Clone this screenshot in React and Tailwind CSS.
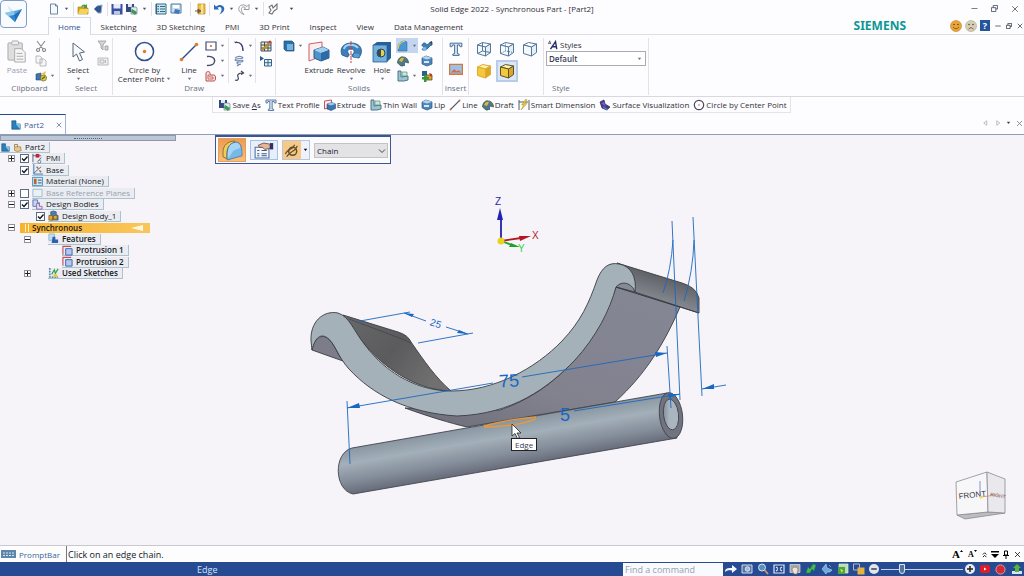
import React, { useState } from "react";
import { Minus, X } from "lucide-react";

// Small toolbar glyphs, all drawn on a 12x12 grid
const glyphs = {
  new: <path d="M2.5 1h5l2 2v8h-7z M7.5 1v2h2" fill="#f5f8fc" stroke="#5d7896" strokeWidth="0.9" />,
  open: (
    <>
      <path d="M1 4h4l1 1h5v6H1z" fill="#d9a520" stroke="#a5780e" strokeWidth="0.6" />
      <path d="M1 11l2-5h9l-2 5z" fill="#f4d35c" />
      <path d="M4 4C5 1 8 1 9 2l1-1v4H6l1.500-1.500" fill="#4f9a3c" />
    </>
  ),
  camera: <path d="M2 6l3-3 5-1-1 8H6z" fill="#30568f" stroke="#8fa9cc" strokeWidth="1" />,
  save: (
    <>
      <path d="M.5 1h11v10.500H.5z" fill="#3b4fa0" />
      <path d="M2.500 1h7v4.500h-7z" fill="#e6ecf7" />
      <path d="M3 8h6v3.500H3z" fill="#b9c8e2" />
    </>
  ),
  saveAs: (
    <>
      <path d="M0 1h8v8H0z" fill="#34497f" />
      <path d="M2 1h4v3H2z" fill="#dfe8f4" />
      <path d="M5 4h5l1 1v6H5z" fill="#dfe9ee" stroke="#52708f" strokeWidth=".6" />
      <path d="M6 6l5 3-2 3-4-3z" fill="#3c9a4c" />
    </>
  ),
  list: (
    <>
      <path d="M1 1h10v10H1z" fill="#cde4ec" stroke="#2f6a87" />
      <path d="M1.500 1v10M5 3.500h5M5 6h5M5 8.500h5M2.500 3.500h1.500M2.500 6h1.500M2.500 8.500h1.500" stroke="#2f6a87" strokeWidth="1.200" />
    </>
  ),
  saveView: (
    <>
      <path d="M1 1h10v9H1z" fill="#c7dcef" stroke="#557aa5" />
      <path d="M3 2h6v3H3z" fill="#fff" />
      <path d="M5 6l5 1-1 4-5-1z" fill="#3b79b8" />
    </>
  ),
  exit: (
    <>
      <path d="M4 1h7v10H4z" fill="#f0c046" stroke="#b98619" strokeWidth=".7" />
      <path d="M1 8h5M4 6l3 2-3 2z" stroke="#705f42" fill="#705f42" />
      <path d="M8 1v10" stroke="#fff" />
    </>
  ),
  undo: <path d="M1 1.500v5h5L4.500 4.800C7 3 9 4.200 8.500 7.500 8.300 9 7 10.500 6 11.500 10 10 12 7 11 4.500 9.700 1.500 6 1 3 3.500z" fill="#2d6bb8" />,
  redo: <path d="M11 1.500v5H6l1.500-1.700C5 3 3 4.200 3.500 7.500c.2 1.500 1.500 3 2.500 4C2 10 0 7 1 4.500 2.300 1.500 6 1 9 3.500z" fill="none" stroke="#8a8f96" strokeWidth=".9" />,
  help: <path d="M2 4l3-2 1 3 4-4v5L7 8l-2 3-3-1 2-3z" fill="none" stroke="#6f7379" strokeWidth="1.100" />,
  cut: <path d="M2 1l6 8M10 1L4 9M3 8.500a1.500 1.500 0 1 0 .1 0M9 8.500a1.500 1.500 0 1 0 .1 0" fill="none" stroke="#8b8b8b" strokeWidth="1.100" />,
  copy: <path d="M1 1h4l2 2v5H1zM5 4h4l2 2v5H5z" fill="#f6f6f6" stroke="#adadad" strokeWidth=".8" />,
  painter: (
    <>
      <path d="M1 4l5-1v7H1z" fill="#3d74b2" stroke="#214a7e" strokeWidth=".6" />
      <path d="M6 4l5-3-1 4z" fill="#e8c33b" />
      <circle cx="8.500" cy="8" r="3" fill="#e8c83d" stroke="#77702a" strokeWidth=".8" />
      <path d="M7 9l3-2.500" stroke="#3a6d38" strokeWidth="1.200" />
    </>
  ),
  filter: <path d="M1 1h8L6 5v5L4 8V5zM8 6h3v4H8z" fill="#d5d5d5" stroke="#9b9b9b" strokeWidth=".8" />,
  selBox: <path d="M1 3h10v7H1zM3 5h4v3H3zM8.500 5v3" fill="#eee" stroke="#adadad" strokeWidth=".8" />,
  rect: (
    <>
      <path d="M1 2h10v8H1z" fill="#fff" stroke="#454a72" strokeWidth="1.200" />
      <circle cx="6" cy="6" r="1.100" fill="#d66b3c" />
    </>
  ),
  arc: <path d="M2 1.500c6-1 9 3 7 6.500C8 10 5 10.500 2 10.500" fill="none" stroke="#454a6c" strokeWidth="1.300" />,
  offset: (
    <>
      <path d="M1 11V3c0-1.500 4-2 4 0v2h4c2 0 2 6 0 6z" fill="#fbe3e0" stroke="#b84c4c" />
      <path d="M3 9V5c1-1 1 2 2 2h3v2z" fill="none" stroke="#b84c4c" strokeWidth=".8" />
    </>
  ),
  fillet: (
    <>
      <path d="M1 2h4" stroke="#999" strokeDasharray="1 1" />
      <path d="M2 2.500c5-1 8 2 8 8.500" fill="none" stroke="#3b3f73" strokeWidth="1.300" />
    </>
  ),
  spiral: <path d="M2 3c4-3 8-1 8 0S3 3 2 5c1 2 8-1 8 1s-7 0-6 2 4 1 4 1-3 1-4 2" fill="none" stroke="#6f89b0" strokeWidth="1.100" />,
  curve: <path d="M2 10c3 1 4-1 3-3s0-4 5-4M8 1l2.500 2L8 4.500" fill="none" stroke="#42465a" strokeWidth="1.200" />,
  grid: (
    <>
      <path d="M1 2h10v9H1zM4.500 2v9M8 2v9M1 5h10M1 8h10" fill="#f8edb0" stroke="#3a4d73" />
      <path d="M2 10l7-7" stroke="#b79028" strokeWidth="1.800" />
      <circle cx="10" cy="2" r="1.500" fill="#c13d47" />
    </>
  ),
  table: (
    <>
      <path d="M0 1l4 2.500L0 6z" fill="#1f5d96" />
      <path d="M4.500 4.500h7v6.500h-7zM8 4.500V11M4.500 7.700h7" fill="#e4f0f7" stroke="#36648b" />
    </>
  ),
  cube: (
    <>
      <path d="M1 1h8l2 2v8H3L1 9z" fill="#2c6ea8" stroke="#214a76" strokeWidth=".7" />
      <path d="M4 4h6v6H4z" fill="#74b5df" />
    </>
  ),
  round: (
    <>
      <path d="M1 11V7c0-3 3-6 7-6l2 1v9z" fill="#4b96d4" stroke="#2f6197" strokeWidth=".5" />
      <path d="M1 9c0-5 3-7 7-8" fill="none" stroke="#e9cf4c" strokeWidth="1.200" />
    </>
  ),
  draft: (
    <>
      <path d="M.5 8c0-4 3-7 6-6 3 0 5 3 5 6L8 7 6 11H4z" fill="#527a76" stroke="#38544f" strokeWidth=".7" />
      <path d="M2 6c1-3 3-4 5-3L5 7z" fill="#d4b855" />
      <path d="M6 6h2v5H6z" fill="#4375ab" />
    </>
  ),
  thin: (
    <>
      <path d="M1 1h3v6l7-1v4l-4 1H1z" fill="#9dc4d2" stroke="#3f6b80" strokeWidth=".9" />
      <path d="M5 2h5v4H5z" fill="#cfe6dd" stroke="#4f8a82" strokeWidth=".7" />
    </>
  ),
  extrude: (
    <>
      <path d="M.5 2l7-1v7l-7 2z" fill="#fceeee" stroke="#c9555c" />
      <path d="M3 5l5-1.500 3.500 1.500v4.500L7 11.500 3 10z" fill="#3c75b0" stroke="#2a4d7c" strokeWidth=".6" />
      <path d="M3 5l4 1.500L11.500 5 8 3.500z" fill="#9cc7e8" />
    </>
  ),
  sweep: (
    <>
      <path d="M1 6C1 3 4 2 5 4c2 2 3-2 6-2v3C8 5 8 9 4 10 0 11 1 8 3 8" fill="#3b82bd" stroke="#22476f" strokeWidth=".8" />
      <circle cx="3.500" cy="9" r="2" fill="#83b9e2" />
      <path d="M8 2.500l3-1.500v3" fill="#274a74" />
    </>
  ),
  lip: (
    <>
      <path d="M1 3l4-2 6 2v6l-5 2-5-2z" fill="#4d86bc" stroke="#2c557e" strokeWidth=".7" />
      <path d="M1 3l5 1.500L11 3 5 1z" fill="#b4d4ec" />
      <path d="M3 6h5v2H3z" fill="#d7e9f5" />
    </>
  ),
  combine: (
    <>
      <path d="M1 1h5v5H1z" fill="#2c5f96" />
      <path d="M5 5h6v5H5z" fill="#d9a52f" stroke="#593a16" strokeWidth=".7" />
      <path d="M3 5h2.500v2H8v2.500H5.500V12H3V9.500H1V7h2z" fill="#37973c" />
      <path d="M8 3l3 1-1 3z" fill="#b53027" />
    </>
  ),
  text: <path d="M1 1h10v3H9.500L9 2.500H7.200v7.500l1.500.3V11.500H3.300v-1.200l1.500-.3V2.500H3L2.500 4H1z" fill="#d6e6f5" stroke="#3e6690" strokeWidth=".8" />,
  image: (
    <>
      <path d="M.5 2h11v8.500H.5z" fill="#9cc0e8" stroke="#cf7a3f" strokeWidth="1.200" />
      <path d="M1.500 9l3-3 2 2 2-1 2 2z" fill="#d56d4b" />
    </>
  ),
  line: (
    <>
      <path d="M1.500 10.500l9-9" stroke="#5e5a68" strokeWidth="1.100" />
      <circle cx="1.500" cy="10.500" r=".9" fill="#c7683a" />
      <circle cx="10.500" cy="1.500" r=".9" fill="#c7683a" />
    </>
  ),
  smart: (
    <>
      <path d="M1 1v10M11 1v10M1 3h9" stroke="#444b5c" strokeWidth=".9" />
      <path d="M8 0L3.500 6h2.200L3 11l6-6.500H6.500L9 1z" fill="#e9cf2c" stroke="#8f7d1d" strokeWidth=".4" />
    </>
  ),
  surface: (
    <>
      <path d="M1 3l4-2 1 4 5 3-3 3-5-2z" fill="#473c8f" stroke="#2a2260" strokeWidth=".7" />
      <path d="M2 4l3-1 2 5z" fill="#7a5bb7" />
      <path d="M4 8l5 3" stroke="#54a1d4" />
    </>
  ),
  circle: (
    <>
      <circle cx="6" cy="6" r="4.700" fill="none" stroke="#4a4c62" strokeWidth="1.200" />
      <circle cx="6" cy="6" r=".8" fill="#c56738" />
    </>
  ),
  styles: (
    <>
      <path d="M.5 5L2 1l1.500 4M1 4h2" fill="none" stroke="#333" strokeWidth=".8" />
      <path d="M3 11l6-9 1.500 9M5 8h5" fill="none" stroke="#252a6b" strokeWidth="1.700" />
    </>
  ),
  part: (
    <>
      <path d="M1 1h5v4h5v6H1z" fill="#2b7fba" stroke="#1d4f7d" strokeWidth=".8" />
      <path d="M6 5l1-1h4v7" fill="#86c3e6" />
    </>
  ),
  lock: (
    <>
      <path d="M2 5h8l1 5-5 1.500L2 10z" fill="#e6c98a" stroke="#8d6b33" strokeWidth=".8" />
      <path d="M2 5V2h4v3" fill="none" stroke="#8d6b33" />
    </>
  ),
  pmi: (
    <>
      <path d="M1 1v9M1 3h9M7 9l3-4" stroke="#4a5274" strokeWidth=".9" />
      <path d="M4 1h4v4H4z" fill="#c22535" />
      <circle cx="8" cy="9.500" r="1.600" fill="#fff" stroke="#4a5274" strokeWidth=".8" />
    </>
  ),
  base: (
    <>
      <path d="M2 0v11h10M2 10l8-7" stroke="#3473ac" fill="none" />
      <path d="M5 3l2 2M8 7l2 2" stroke="#b0562c" strokeWidth="1.400" />
    </>
  ),
  material: (
    <>
      <path d="M.5 1.500h11v9H.5z" fill="#d4e9f6" stroke="#4292bd" />
      <path d="M2 3h3v6H2z" fill="#b7672f" />
      <path d="M6.500 4.500h4M6.500 7.500h4" stroke="#294b70" />
    </>
  ),
  plane: <path d="M1 2.500h10v8H1z" fill="#eaf1f6" stroke="#a1b9c8" />,
  bodies: (
    <>
      <path d="M1 1h5v3h2v4H1z" fill="#c6d3f2" stroke="#586ca5" strokeWidth=".9" />
      <path d="M5 5h3v3h3v3H5z" fill="#e9dff5" stroke="#8660a4" strokeWidth=".9" />
    </>
  ),
  body: (
    <>
      <path d="M3 6V2l3-1 3 1v3l2 1v5H3z" fill="#3f82b8" stroke="#295072" strokeWidth=".7" />
      <path d="M1 6h4v5H1zM6 6h4v4H6z" fill="#e5a63a" stroke="#855b1b" strokeWidth=".8" />
    </>
  ),
  features: (
    <>
      <path d="M1 1h6v7H1z" fill="#bfe0f1" stroke="#70a6c8" strokeWidth=".7" />
      <path d="M5 4h3v3h3v4H4z" fill="#2f5fb0" />
    </>
  ),
  protrusion: (
    <>
      <path d="M1 10.500V1.500h9" fill="none" stroke="#c64e57" strokeWidth="1.200" />
      <path d="M4 4h7v7H4z" fill="#b4c7ef" stroke="#3f5eab" />
    </>
  ),
  sketches: (
    <>
      <path d="M2 1v10h9" stroke="#2f6e9e" strokeWidth="1.400" fill="none" strokeDasharray="2 1" />
      <path d="M4 8l3-5 1 4 3-5" stroke="#36a24d" strokeWidth="1.300" fill="none" />
      <path d="M6 8h4v3H6z" fill="#f0c434" />
    </>
  ),
  arrow: <path d="M0 9c0-4 3-4 7-4V2l5 4-5 4V7.500C4 7 2 7 0 9z" fill="#f4f8ff" />,
  zoomArea: (
    <>
      <path d="M1 2h10v8H1z" fill="#55749f" stroke="#cfdcf0" />
      <circle cx="6.500" cy="6" r="2.300" fill="#9bbbe0" stroke="#eef" strokeWidth=".8" />
    </>
  ),
  zoom: (
    <>
      <circle cx="5" cy="4.500" r="3.500" fill="#5590bf" stroke="#d5e2f1" />
      <path d="M7.500 7l3.500 4" stroke="#c39c7a" strokeWidth="1.800" />
    </>
  ),
  fit: <path d="M1 2h10v8H1zM3 4l2 1.500M9 4L7 5.500M3 8l2-1.500M9 8L7 6.500" fill="#22478b" stroke="#e0eafa" strokeWidth="1.200" />,
  pan: (
    <>
      <path d="M1 1.500h10v8H1z" fill="#a5a9ab" stroke="#e0e2e5" strokeWidth=".7" />
      <path d="M3 7c0-4 6-4 6 0l-1 4H5z" fill="#f0e3d2" stroke="#786b5b" strokeWidth=".6" />
    </>
  ),
  rotate: <path d="M1 10l2-6 2 2 3-5 3 1-2 6-2-2-2 4z" fill="#45bb54" stroke="#227941" strokeWidth=".5" />,
  look: <path d="M1 6l4-5 1 4 5 2-2 2H6l-1 2zM8 2l2 2" fill="#6aabdd" stroke="#b8d4ee" strokeWidth=".6" />,
  views: (
    <>
      <path d="M2 1h9v9H2z" fill="#b9ddb6" stroke="#e2efcf" strokeWidth=".7" />
      <path d="M1 4h7v7H1z" fill="#4aa83b" />
      <path d="M3 6l3 1-1 3" fill="#e6dc61" />
    </>
  ),
  styleBox: (
    <>
      <path d="M.5 1h6v6h-6z" fill="none" stroke="#aeb9c8" />
      <path d="M4.500 4.500h7v7h-7z" fill="#e6b13f" />
    </>
  ),
  dimension: (
    <>
      <path d="M1 9c2-5 5-2 7-7M2 11c3-5 6-3 8-8" fill="none" stroke="#5d4d2b" strokeWidth=".9" />
      <circle cx="6.500" cy="7" r="3" fill="none" stroke="#5d4d2b" strokeWidth="1.100" />
    </>
  ),
};

function Glyph({ name, className = "size-3" }) {
  return (
    <svg viewBox="0 0 12 12" className={`shrink-0 ${className}`} fill="none" aria-hidden="true">
      {glyphs[name]}
    </svg>
  );
}

function Caret({ className = "text-gray-500" }) {
  return (
    <svg viewBox="0 0 6 4" className={`w-[5px] shrink-0 ${className}`} aria-hidden="true">
      <path d="M1 1h4L3 3.500z" fill="currentColor" />
    </svg>
  );
}

function Tool({ name, label, size }) {
  return (
    <button type="button" aria-label={label} className="flex shrink-0 items-center">
      <Glyph name={name} className={size} />
    </button>
  );
}

function SmallTool({ name, label, caret, active }) {
  return (
    <button
      type="button"
      aria-label={label}
      className={`flex h-[15px] items-center gap-[3px] px-px ${active ? "bg-[#c3d5f1]" : ""}`}
    >
      <Glyph name={name} />
      {caret && <Caret />}
    </button>
  );
}

function ToolColumn({ items, className = "" }) {
  return (
    <div className={`flex flex-col items-start ${className}`}>
      {items.map(([name, label, caret, active]) => (
        <SmallTool key={name} name={name} label={label} caret={caret} active={active} />
      ))}
    </div>
  );
}

function BigTool({ label, second, caret, disabled, className, children }) {
  return (
    <button
      type="button"
      className={`flex flex-col items-center text-center leading-[9px] ${disabled ? "text-gray-400" : ""} ${className}`}
    >
      <span className="flex h-[27px] items-center">{children}</span>
      <span className="whitespace-nowrap">{label}</span>
      {second && (
        <span className="flex items-center gap-0.5 whitespace-nowrap">
          {second} <Caret />
        </span>
      )}
      {caret && <Caret className="mt-[3px] text-gray-500" />}
    </button>
  );
}

function Group({ label, className, labelClass = "text-center", children }) {
  return (
    <section className={`flex h-[57px] shrink-0 flex-col border-r border-[#e3e2e7] ${className}`}>
      <div className="flex h-[45px] items-start">{children}</div>
      <div className={`h-[9px] leading-[9px] text-gray-500 ${labelClass}`}>{label}</div>
    </section>
  );
}

function Wire({ label, kind }) {
  const face = kind === "solid" || kind === "edges";
  const edge = kind === "solid" ? "#e0ab2e" : kind === "edges" ? "#58532f" : "#54789a";
  return (
    <button
      type="button"
      aria-label={label}
      className={`flex h-[22px] w-[22px] items-center justify-center ${kind === "edges" ? "border-2 border-[#b9cbe7] bg-[#dbe7f7]" : ""}`}
    >
      <svg viewBox="0 0 16 16" className="size-4 shrink-0" fill="none" stroke={edge} strokeLinejoin="round">
        <path d="M1.500 4l5-2.500 8 1.500-5 3z" fill={face ? "#fdf0a8" : "#fff"} />
        <path d="M1.500 4l8 2v9l-8-2.500z" fill={face ? "#f4c83d" : "#f3f9fd"} />
        <path d="M9.500 6l5-3v8.500l-5 3.500z" fill={face ? "#dca726" : "#e3f0f8"} />
        {kind === "wire" && <path d="M6.500 1.500V10l8 1.500M6.500 10l-5 2.500" />}
        {kind === "hidden" && <path d="M6.500 1.500V10l8 1.500M6.500 10l-5 2.500" strokeDasharray="1 1" />}
      </svg>
    </button>
  );
}

function AppButton() {
  return (
    <button type="button" aria-label="Application menu" className="h-7 w-[27px] shrink-0 rounded-sm border border-[#7f9dc6] bg-[#f8fafd]">
      <svg viewBox="0 0 25 26" className="w-full">
        <path d="M6 4l8 7-2 7z" fill="#d3ebf7" />
        <path d="M4 12l9-2 8-2-7 13z" fill="#58a8df" />
        <path d="M4 12l9-2 1 11z" fill="#8cc6ea" />
        <path d="M13 14l8-6-7 13z" fill="#1f6fbe" />
        <path d="M8 15l5-1 1 7z" fill="#2f86cf" />
      </svg>
    </button>
  );
}

function Face({ sad }) {
  return (
    <svg viewBox="0 0 12 12" className="size-3">
      <circle cx="6" cy="6" r="5.500" fill={sad ? "#d5cfb8" : "#eba63a"} stroke={sad ? "#aaa48f" : "#c27b22"} strokeWidth=".6" />
      <circle cx="4" cy="4.500" r=".8" fill="#5d4520" />
      <circle cx="8" cy="4.500" r=".8" fill="#5d4520" />
      <path d={sad ? "M3.500 9q2.500-3 5 0" : "M3 7q3 3.500 6 0"} fill="none" stroke="#704c1d" strokeWidth=".8" />
    </svg>
  );
}

function Restore({ className }) {
  return (
    <svg viewBox="0 0 8 8" className={className} fill="none" stroke="currentColor">
      <path d="M2.500 2.500v-2h5v4h-2M.5 3h5v4.500h-5z" />
    </svg>
  );
}

const quickGroups = [
  { items: ["new", "caret"], className: "pr-[3px]" },
  { items: ["open", "camera"], className: "px-[3px]" },
  { items: ["save", "saveAs", "caret"], className: "px-[3px]" },
  { items: ["list", "saveView"], className: "pl-[3px] pr-2" },
  { items: ["exit"], className: "px-[3px]" },
  { items: ["undo", "caret", "redo", "caret"], className: "px-[3px]" },
  { items: ["help"], className: "px-[3px] border-transparent" },
];

const ribbonTabs = ["Home", "Sketching", "3D Sketching", "PMI", "3D Print", "Inspect", "View", "Data Management"];

function Header() {
  const [tab, setTab] = useState("Home");

  return (
    <header className="flex h-[35px] shrink-0 border-b border-[#dfdde4]">
      <AppButton />
      <div className="flex min-w-0 flex-1 flex-col">
        <div className="relative flex h-[17px] shrink-0 items-center pl-[21px] pr-1">
          {quickGroups.map((g, i) => (
            <div key={i} className={`flex h-3.5 items-center gap-[3px] border-r border-[#e0e0e6] ${g.className}`}>
              {g.items.map((name, k) =>
                name === "caret" ? (
                  <Caret key={k} className="mx-px text-gray-600" />
                ) : (
                  <Tool key={k} name={name} label={name} />
                )
              )}
            </div>
          ))}
          <Caret className="ml-1.5 text-gray-700" />
          <h1 className="pointer-events-none absolute inset-x-0 pr-[27px] text-center">
            Solid Edge 2022 - Synchronous Part - [Part2]
          </h1>
          <div className="ml-auto flex items-center gap-3 text-gray-600">
            <button type="button" aria-label="Minimize"><Minus className="size-[9px]" /></button>
            <button type="button" aria-label="Restore"><Restore className="size-[7px]" /></button>
            <button type="button" aria-label="Close"><X className="size-[10px]" /></button>
          </div>
        </div>
        <div className="flex flex-1 items-center pl-[21px]">
          <nav className="flex h-full">
            {ribbonTabs.map((t) => (
              <button
                key={t}
                type="button"
                onClick={() => setTab(t)}
                className={
                  tab === t
                    ? "-mb-px border border-b-0 border-[#d4d9e4] bg-[#fdfcfe] px-[9px] text-[#2b4f8e]"
                    : "px-[10px] pt-px"
                }
              >
                {t}
              </button>
            ))}
          </nav>
          <span className="ml-auto mr-11 font-['Noto_Sans'] text-[12px] font-bold text-[#0b9795]">SIEMENS</span>
          <div className="flex items-center gap-[3px]">
            <Face />
            <Face sad />
            <button type="button" className="flex h-[11px] w-2.5 items-center justify-center bg-[#24549b] text-[9px] font-bold text-white">?</button>
          </div>
          <div className="ml-1 flex items-center gap-1 text-gray-800">
            <Minus className="size-2" />
            <Restore className="size-1.5" />
            <X className="size-2" />
          </div>
        </div>
      </div>
    </header>
  );
}

function Ribbon() {
  return (
    <div className="flex h-[62px] shrink-0 border-b border-[#d9d8df] pt-[3px]">
      <Group label="Clipboard" className="w-[60px]">
        <BigTool label="Paste" disabled className="w-[34px]">
          <svg viewBox="0 0 20 24" className="h-[23px]" stroke="#aaa">
            <rect x="1" y="3" width="15" height="18" rx="1" fill="#dedede" />
            <rect x="5" y="1" width="7" height="4" rx="1" fill="#eee" />
            <path d="M8 9h7l4 4v10H8z" fill="#f5f5f5" />
            <path d="M10 14h6M10 17h7M10 20h7" />
          </svg>
        </BigTool>
        <ToolColumn items={[["cut", "Cut"], ["copy", "Copy"], ["painter", "Format painter", true]]} />
      </Group>

      <Group label="Select" className="w-[53px]">
        <BigTool label="Select" caret className="w-[36px]">
          <svg viewBox="0 0 14 20" className="h-5">
            <path d="M2 1v14l3.500-3 3 7 3-1.500-3-6.500 5-1z" fill="#f7fafc" stroke="#56677a" />
          </svg>
        </BigTool>
        <ToolColumn items={[["filter", "Selection filter"], ["selBox", "Selection options"]]} />
      </Group>

      <Group label="Draw" className="w-[163px]">
        <BigTool label="Circle by" second="Center Point" className="w-[63px]">
          <svg viewBox="0 0 22 22" className="size-[21px]">
            <circle cx="11" cy="11" r="9.500" fill="none" stroke="#31508b" strokeWidth="1.600" />
            <circle cx="11" cy="11" r="1.800" fill="#e27a2c" />
          </svg>
        </BigTool>
        <BigTool label="Line" caret className="w-[26px]">
          <svg viewBox="0 0 20 20" className="size-5">
            <path d="M2.500 17.500l15-15" stroke="#31508b" strokeWidth="1.500" />
            <circle cx="2.500" cy="17.500" r="1.800" fill="#e27a2c" />
            <circle cx="17.500" cy="2.500" r="1.800" fill="#e27a2c" />
          </svg>
        </BigTool>
        <ToolColumn items={[["rect", "Rectangle", true], ["arc", "Arc", true], ["offset", "Offset", true]]} className="w-[26px] pl-0.5" />
        <ToolColumn
          items={[["fillet", "Fillet", true], ["spiral", "Spiral"], ["curve", "Curve", true]]}
          className="w-[27px] border-l border-[#e3e2e7] pl-[3px]"
        />
        <ToolColumn items={[["grid", "Grid"], ["table", "Table"]]} className="h-[45px] border-l border-[#e3e2e7] pl-[3px]" />
      </Group>

      <Group label="Solids" className="w-[167px]">
        <ToolColumn items={[["cube", "Solids", true]]} className="w-[29px] pl-1.5" />
        <BigTool label="Extrude" className="w-[28px]">
          <svg viewBox="0 0 22 22" className="size-[22px]">
            <path d="M1 3l13-2v14L1 20z" fill="#fceeee" stroke="#cf5f63" />
            <path d="M6 9l9-3 6 3v8l-8 3-7-3z" fill="#4f92cb" stroke="#295c8f" />
            <path d="M6 9l7 3 8-3-6-3z" fill="#a3cfee" />
            <path d="M13 12v8l8-3V9z" fill="#2e6aa5" />
          </svg>
        </BigTool>
        <BigTool label="Revolve" caret className="w-[36px]">
          <svg viewBox="0 0 22 22" className="size-[22px]">
            <path d="M2 14C-1 7 4 2 11 2s12 4 10 11l-2 4-6-1c-2-1-1-3 1-4 1-3-1-4-3-4-3 0-4 2-3 4 2 1 1 4-1 4z" fill="#3b80bc" stroke="#23527f" strokeWidth=".8" />
            <path d="M4 8c1-5 10-6 14-1" stroke="#acd2ee" strokeWidth="2" fill="none" />
            <ellipse cx="16.500" cy="14.500" rx="3" ry="2" fill="#5d9dcf" />
            <path d="M11 0v22" stroke="#c74148" strokeDasharray="4 1" />
          </svg>
        </BigTool>
        <BigTool label="Hole" caret className="w-[26px]">
          <svg viewBox="0 0 20 22" className="h-[22px]">
            <path d="M1 4l4-3h14v16l-4 4H1z" fill="#246298" />
            <path d="M1 4h14v17H1z" fill="#74b0dc" stroke="#2a6194" strokeWidth=".8" />
            <circle cx="9" cy="12" r="4" fill="#e7ce4b" stroke="#244562" />
            <path d="M9 8a4 4 0 0 0 0 8z" fill="#354d5b" />
          </svg>
        </BigTool>
        <ToolColumn
          items={[["round", "Round", true, true], ["draft", "Draft"], ["thin", "Thin wall", true]]}
          className="w-[25px] pl-px"
        />
        <ToolColumn items={[["sweep", "Sweep", false], ["lip", "Lip"], ["combine", "Combine"]]} />
      </Group>

      <Group label="Insert" className="w-[26px]">
        <div className="flex w-full flex-col items-center gap-1.5 pt-1">
          <Tool name="text" label="Text" size="size-3.5" />
          <Tool name="image" label="Image" size="size-3.5" />
        </div>
      </Group>

      <Group label="" className="w-[75px]">
        <div className="grid grid-cols-3 gap-x-px pl-1">
          <Wire kind="wire" label="Wire frame" />
          <Wire kind="hidden" label="Hidden edges" />
          <Wire kind="visible" label="Visible edges" />
          <Wire kind="solid" label="Shaded" />
          <Wire kind="edges" label="Shaded with edges" />
        </div>
      </Group>

      <Group label="Style" className="w-[105px]" labelClass="pl-2">
        <div className="w-full px-0.5 pt-px">
          <label htmlFor="style" className="flex h-[11px] items-center gap-0.5 pl-0.5">
            <Glyph name="styles" className="size-[10px]" /> Styles
          </label>
          <div className="relative mt-px">
            <select id="style" className="h-[15px] w-full appearance-none border border-[#aaaab0] bg-white pl-0.5 font-semibold text-gray-700">
              <option>Default</option>
            </select>
            <div className="pointer-events-none absolute inset-y-0 right-1 flex items-center"><Caret /></div>
          </div>
        </div>
      </Group>
    </div>
  );
}

const quickTools = [
  ["saveAs", "Save As"],
  ["text", "Text Profile"],
  ["extrude", "Extrude"],
  ["thin", "Thin Wall"],
  ["lip", "Lip"],
  ["line", "Line"],
  ["draft", "Draft"],
  ["smart", "Smart Dimension"],
  ["surface", "Surface Visualization"],
  ["circle", "Circle by Center Point"],
];

function QuickToolbar() {
  return (
    <div className="flex h-4 shrink-0 justify-center pr-[21px]">
      <div className="flex items-center gap-1 border border-t-0 border-[#e5e3e9] pl-1.5 pr-[3px]">
        {quickTools.map(([name, label]) => (
          <button key={label} type="button" className="flex items-center gap-px whitespace-nowrap">
            <Glyph name={name} />
            {label === "Save As" ? <span>Save <u>A</u>s</span> : label}
          </button>
        ))}
      </div>
    </div>
  );
}

function DocumentTabs() {
  return (
    <div className="flex h-[22px] shrink-0 items-end justify-between border-b border-[#8d9eb8]">
      <div className="flex h-5 w-[66px] items-center border-t border-r border-t-[#24498f] border-r-[#9fb2d0] pl-[11px] text-[#3e5f97]">
        <Glyph name="part" className="size-2.5" />
        <span className="ml-[3px]">Part2</span>
        <button type="button" aria-label="Close Part2" className="ml-auto mr-0.5"><X className="size-2" /></button>
      </div>
      <div className="flex h-[22px] items-center gap-1 text-gray-500">
        <svg viewBox="0 0 6 8" className="h-1.5"><path d="M5 1v6L1 4z" fill="none" stroke="#aaa" /></svg>
        <svg viewBox="0 0 6 8" className="ml-1 h-1.5"><path d="M1 1v6l4-3z" fill="none" stroke="#aaa" /></svg>
        <Caret className="ml-0.5 text-gray-700" />
        <button type="button" aria-label="Close document"><X className="size-[9px]" /></button>
      </div>
    </div>
  );
}

const treeRows = [
  { label: "PMI", icon: "pmi", exp: "+", check: true, pad: "pl-2" },
  { label: "Base", icon: "base", check: true, pad: "pl-2" },
  { label: "Material (None)", icon: "material", pad: "pl-2" },
  { label: "Base Reference Planes", icon: "plane", exp: "+", check: false, pad: "pl-2", muted: true },
  { label: "Design Bodies", icon: "bodies", exp: "-", check: true, pad: "pl-2" },
  { label: "Design Body_1", icon: "body", check: true, pad: "pl-6" },
  { label: "Synchronous", exp: "-", pad: "pl-2", bar: true },
  { label: "Features", icon: "features", exp: "-", pad: "pl-6", bold: true },
  { label: "Protrusion 1", icon: "protrusion", pad: "pl-[38px]", bold: true },
  { label: "Protrusion 2", icon: "protrusion", pad: "pl-[38px]", bold: true },
  { label: "Used Sketches", icon: "sketches", exp: "+", pad: "pl-6", bold: true },
];

const labelBox = "flex h-[11px] items-center gap-[3px] whitespace-nowrap border-r border-b border-[#aac3cf] bg-[#eaecf1] pr-1";

function TreeRow({ row }) {
  const [checked, setChecked] = useState(row.check);

  return (
    <li className={`flex h-[11px] items-center ${row.pad}`}>
      <span className="w-3 shrink-0">
        {row.exp && (
          <button type="button" aria-label={`Toggle ${row.label}`} className="block size-[7px] border border-[#8f929b] bg-white">
            <svg viewBox="0 0 5 5" className="w-full" stroke="#222">
              <path d={row.exp === "+" ? "M0 2.500h5M2.500 0v5" : "M0 2.500h5"} />
            </svg>
          </button>
        )}
      </span>
      {row.bar ? (
        <div className="flex h-[10px] w-[130px] items-center gap-0.5 bg-linear-to-r from-[#f7b32c] to-[#f9c65b] pl-1 font-semibold">
          <svg viewBox="0 0 6 8" className="h-2" stroke="#fff3cf"><path d="M1.500 0v8M4.500 0v8" /></svg>
          {row.label}
          <svg viewBox="0 0 12 6" className="ml-auto mr-[7px] h-1.5"><path d="M12 0v6L0 3z" fill="#fff7e2" /></svg>
        </div>
      ) : (
        <>
          <span className="w-3 shrink-0">
            {row.check !== undefined && (
              <span className="relative block size-[9px]">
                <input
                  type="checkbox"
                  aria-label={row.label}
                  checked={checked}
                  onChange={(e) => setChecked(e.target.checked)}
                  className="block size-[9px] appearance-none border border-[#5b6d85] bg-white"
                />
                {checked && (
                  <svg viewBox="0 0 9 9" className="pointer-events-none absolute inset-0" fill="none" stroke="#111" strokeWidth="1.300">
                    <path d="M2 4.500l2 2 3.500-4" />
                  </svg>
                )}
              </span>
            )}
          </span>
          <div className={`${labelBox} ${row.bold ? "font-semibold" : ""} ${row.muted ? "text-gray-400" : ""}`}>
            <Glyph name={row.icon} className="size-[11px]" />
            {row.label}
          </div>
        </>
      )}
    </li>
  );
}

function PathFinder() {
  return (
    <aside className="relative w-[176px] leading-[10px] text-[#16181d]">
      <div className="flex h-1.5 items-center justify-center border border-[#8e98aa] bg-[#bcc6d4]">
        <div className="w-7 border-t border-dotted border-[#54627a]" />
      </div>
      <ul className="flex h-[138px] flex-col justify-between pt-px">
        <li className="flex h-[11px]">
          <div className={`${labelBox} pl-px`}>
            <Glyph name="part" className="size-[9px]" />
            <Glyph name="lock" className="size-[9px]" />
            Part2
          </div>
        </li>
        {treeRows.map((row) => (
          <TreeRow key={row.label} row={row} />
        ))}
      </ul>
    </aside>
  );
}

function CommandBar() {
  return (
    <div className="relative ml-[39px] flex h-[29px] w-[176px] items-center gap-1 border border-t-2 border-[#3b5690] bg-[#fbfbfd] px-0.5">
      <button type="button" aria-label="Round" className="flex h-6 w-7 items-center justify-center border border-[#dfa15e] bg-linear-to-b from-[#ec9b51] to-[#fbbd77]">
        <svg viewBox="0 0 20 20" className="size-[21px]">
          <path d="M1 16V11C1 5 6 1 12 1l-2 3c-4 1-6 5-5 14z" fill="#f1cd56" stroke="#7b642e" strokeWidth=".8" />
          <path d="M5 19C4 9 6 3 13 2c5 0 6 5 6 13z" fill="#a4d5f4" stroke="#31699b" strokeWidth=".8" />
          <path d="M5 19l6-9 8-3v8z" fill="#5ba5dc" opacity=".6" />
        </svg>
      </button>
      <button type="button" aria-label="Options" className="flex h-5 w-7 items-center justify-center border border-[#a9c0e3] bg-[#e7effb]">
        <svg viewBox="0 0 20 16" className="h-[17px]">
          <path d="M2 5h13v10H2z" fill="#f4f7fb" stroke="#506fa4" />
          <path d="M4 8h2M4 11h2M8 8h5M8 11h5M4 13h2M8 13h5" stroke="#3e5988" />
          <path d="M5 3l5-2 6 1v4l-5 1-2-2H6z" fill="#e6b698" stroke="#684b43" strokeWidth=".8" />
          <path d="M16 1h3v6h-3z" fill="#2e306c" />
        </svg>
      </button>
      <div className="flex h-5 w-7 items-center border border-[#b9c5dd] bg-[#eef2fa]">
        <button type="button" aria-label="Selection type" className="flex h-full w-[18px] items-center justify-center bg-[#f8c886]">
          <Glyph name="dimension" className="size-4" />
        </button>
        <button type="button" aria-label="More selection types" className="flex flex-1 justify-center"><Caret className="text-black" /></button>
      </div>
      <div className="relative flex-1">
        <select aria-label="Select" className="h-[15px] w-full appearance-none border border-[#c3c3c7] bg-[#e3e2e5] pl-0.5 text-gray-900">
          <option>Chain</option>
          <option>Edge/Corner</option>
          <option>Face</option>
          <option>Loop</option>
        </select>
        <svg viewBox="0 0 8 8" className="pointer-events-none absolute top-1 right-0.5 size-2" fill="none" stroke="#444">
          <path d="M1 2.500l3 3 3-3" />
        </svg>
      </div>
    </div>
  );
}

function Model() {
  return (
    <svg viewBox="0 135 1024 410" className="absolute inset-0 h-full w-full" strokeLinejoin="round" aria-label="Part2 model">
      <defs>
        <linearGradient id="bore" x1="0" y1="0" x2="1" y2="0.300">
          <stop offset="0" stopColor="#7b858f" />
          <stop offset="0.500" stopColor="#a9b5bf" />
          <stop offset="1" stopColor="#aab5be" />
        </linearGradient>
        <linearGradient id="tubeBody" gradientUnits="userSpaceOnUse" x1="506" y1="420" x2="514" y2="467">
          <stop offset="0" stopColor="#87939e" />
          <stop offset="0.350" stopColor="#a3afb9" />
          <stop offset="0.700" stopColor="#858e9b" />
          <stop offset="1" stopColor="#666a79" />
        </linearGradient>
        <linearGradient id="lipTop" gradientUnits="userSpaceOnUse" x1="662" y1="273" x2="654" y2="300">
          <stop offset="0" stopColor="#5a5c60" />
          <stop offset="1" stopColor="#858991" />
        </linearGradient>
        <linearGradient id="under" x1="0" y1="1" x2="0.800" y2="0">
          <stop offset="0" stopColor="#6d6d78" />
          <stop offset="0.400" stopColor="#82828f" />
          <stop offset="1" stopColor="#858694" />
        </linearGradient>
        <linearGradient id="inside" x1="0" y1="0" x2="1" y2="0.600">
          <stop offset="0" stopColor="#68696c" />
          <stop offset="0.550" stopColor="#5b5b5d" />
          <stop offset="1" stopColor="#707071" />
        </linearGradient>
      </defs>

      {/* bracket */}
      <g stroke="#393c42" strokeWidth="0.900">
        <path d="M343 315L398 332Q408 335 411 342C425 362 435 377 451 391C410 390 373 360 354 330Z" fill="url(#inside)" />
        <path d="M349 319L402 339L411 343" fill="none" strokeWidth="0.600" />
        <path d="M312 350C314 338 322 333 329 339C335 345 337 354 343 361Z" fill="#7d7d8a" />
        <path d="M405 408C430 417 450 423 467 427L615 402C646 374 665 342 680 307L616 287C596 345 556 391 500 410Z" fill="url(#under)" />
        <path d="M617 263L682 283Q696 287 699 298L699 313L635 292L628 268Z" fill="url(#lipTop)" />
        <path d="M616 287C622 280 632 282 635 292Z" fill="#858b94" />
        <path
          d="M312 350L311 341C310 322 323 310 338 313C350 317 353 330 365 345C388 376 421 391 451 391C494 391 535 369 562 341C581 321 589 303 597 280C602 267 609 262 619 264C631 266 637 277 635 292C632 283 622 280 616 287C610 310 596 337 575 360C548 388 513 414 457 416C408 413 373 395 349 369C337 356 335 342 326 337C318 333 314 342 312 350Z"
          fill="#a5b1b8"
        />
        <path d="M616 287L699 313" fill="none" />
      </g>

      {/* tube */}
      <g stroke="#41454e" strokeWidth="0.900">
        <path d="M352 448L667 393L677 438L353 494C334 490 333 453 352 448Z" fill="url(#tubeBody)" />
        <ellipse cx="671" cy="415.500" rx="11.500" ry="23" transform="rotate(-7 671 415.500)" fill="#71747e" />
        <ellipse cx="671" cy="414.500" rx="7.500" ry="15.500" transform="rotate(-7 671 414.500)" fill="url(#bore)" />
      </g>

      {/* highlighted edge */}
      <path d="M484 426Q510 419 536 417M484 427Q515 427 536 419" fill="none" stroke="#e69a3f" strokeWidth="1.500" />

      {/* dimensions */}
      <g fill="none" stroke="#1c68bd" strokeWidth="0.900">
        <path d="M347 401L350 464M347 408L493 383M522 377L667 353M667 346L671 408" />
        <path d="M574 411L680 394M672 221L680 400M693 217L702 396M726 385L702 389" />
        <path d="M673 240Q671 270 663 293M694 240Q693 272 684 301" />
        <path d="M360 321L410 312M418 343L473 333M404 313L426 321M446 327L468 334" />
      </g>
      <g fill="#1767c5">
        <path d="M347 408l12-5 1 5zM667 353l-12-1 1 5zM680 394l-12 0 1 4zM702 389l12-5 0 5zM404 313l10 1-2 3zM468 334l-11-1 2-3z" />
        <g fontFamily="Liberation Sans, sans-serif">
          <text x="499" y="387" fontSize="18" transform="rotate(-4 508 381)">75</text>
          <text x="560" y="421" fontSize="18">5</text>
          <text x="430" y="327" fontSize="10" transform="rotate(18 436 324)">25</text>
        </g>
      </g>

      {/* axis triad */}
      <g strokeWidth="1.800" fontFamily="Liberation Sans, sans-serif" fontSize="10">
        <path d="M501 240V218" stroke="#2320b5" />
        <path d="M500 208l3 12h-6z" fill="#2320b5" />
        <path d="M501 241l20-3" stroke="#b31722" />
        <path d="M531 236l-11 5-1-5z" fill="#b31722" />
        <path d="M501 241l11 4" stroke="#1ca32d" />
        <path d="M520 247l-11 0 2-4z" fill="#1ca32d" />
        <circle cx="501" cy="241" r="3.500" fill="#e5d51f" />
        <text x="495" y="205" fill="#2b25a8">Z</text>
        <text x="532" y="239" fill="#b01e2c">X</text>
        <text x="518" y="252" fill="#2ed43e">Y</text>
      </g>

      {/* view cube */}
      <g stroke="#8c8c90" strokeWidth="0.800" fontFamily="Liberation Sans, sans-serif">
        <path d="M957 515l8 4 40-6-17-1z" fill="#bcbcc1" />
        <path d="M956 482l31-10 1 40-31 3z" fill="#f7f7f9" />
        <path d="M987 472l18 7v34l-17-1z" fill="#e9e9ed" />
        <text x="959" y="499" fontSize="8" stroke="none" fill="#3b3b42" transform="rotate(-6 959 499)">FRONT</text>
        <text x="990" y="496" fontSize="5" stroke="none" fill="#763f48" transform="rotate(9 990 496)">RIGHT</text>
        <path d="M980 497V481" stroke="#6b79c6" />
        <path d="M981 497l15-2" stroke="#cf8c63" />
        <circle cx="981" cy="497" r="1.500" fill="#dfdc5e" stroke="none" />
      </g>

      {/* pointer */}
      <path d="M512 424v12l3-2.500 2.500 5 2-1-2.500-4.500h4z" fill="#fff" stroke="#222" strokeWidth="0.800" />
    </svg>
  );
}

function PromptBar() {
  return (
    <div className="flex h-[17px] shrink-0 items-center border-t border-[#c9c8ce] bg-[#fdfdfe]">
      <svg viewBox="0 0 15 8" className="ml-px h-2 w-[15px]">
        <path d="M0 0h15v8H0z" fill="#5f87ac" />
        <path d="M2 3h11M2 5.500h11" stroke="#d5e4f1" strokeDasharray="2 1" />
      </svg>
      <span className="ml-[3px] w-[47px] text-[#3c6698]">PromptBar</span>
      <div className="flex h-full flex-1 items-center border-l border-[#77777d] pl-px text-[9px] text-gray-900">Click on an edge chain.</div>
      <div className="flex items-center gap-1 pr-0.5 text-black">
        <button type="button" aria-label="Larger text" className="flex items-center font-['Liberation_Serif'] text-[11px] font-bold">
          A
          <svg viewBox="0 0 4 8" className="h-2" fill="currentColor"><path d="M0 2l1.500-2L3 2z" /></svg>
        </button>
        <button type="button" aria-label="Smaller text" className="flex items-center font-['Liberation_Serif'] text-[8px] font-bold">
          A
          <svg viewBox="0 0 4 8" className="h-2" fill="currentColor"><path d="M0 0h3L1.500 2z" /></svg>
        </button>
        <svg viewBox="0 0 6 8" className="h-[7px]" fill="none" stroke="currentColor"><path d="M1 4l2-2 2 2M1 7l2-2 2 2" /></svg>
        <svg viewBox="0 0 8 8" className="h-2"><path d="M0 1h8v1.500H0zM0 4h8L4 8z" fill="currentColor" /></svg>
        <svg viewBox="0 0 6 9" className="h-[9px]" stroke="currentColor" fill="none"><path d="M1.500 1h3v4h-3zM0 5.500h6M3 5.500V9" /></svg>
        <button type="button" aria-label="Close prompt bar"><X className="size-[9px]" /></button>
      </div>
    </div>
  );
}

const viewTools = ["arrow", "zoomArea", "zoom", "fit", "pan", "rotate", "look", "views", "styleBox"];

function StatusBar() {
  const [zoom, setZoom] = useState(24);

  return (
    <footer className="flex h-3.5 shrink-0 items-center bg-[#264b92] pr-px text-[9px] text-[#d9e5f6]">
      <span className="ml-[197px]">Edge</span>
      <input
        aria-label="Find a command"
        placeholder="Find a command"
        className="ml-auto h-[13px] w-[100px] bg-[#f8fafd] px-0.5 text-gray-800 placeholder:text-gray-400"
      />
      <div className="ml-0.5 flex items-center gap-1">
        {viewTools.map((name) => (
          <Tool key={name} name={name} label={name} />
        ))}
        <button type="button" aria-label="Zoom out" className="flex size-[10px] items-center justify-center rounded-full bg-[#e2e5ea] text-gray-700">
          <Minus className="size-2" strokeWidth={4} />
        </button>
      </div>
      <input
        type="range"
        aria-label="Zoom"
        value={zoom}
        onChange={(e) => setZoom(Number(e.target.value))}
        className="mx-0.5 h-px w-[82px] appearance-none bg-[#c6d3e8] [&::-webkit-slider-thumb]:h-2.5 [&::-webkit-slider-thumb]:w-1.5 [&::-webkit-slider-thumb]:appearance-none [&::-webkit-slider-thumb]:rounded-b-sm [&::-webkit-slider-thumb]:border [&::-webkit-slider-thumb]:border-[#dde5f0] [&::-webkit-slider-thumb]:bg-[#56739f]"
      />
      <button type="button" aria-label="Zoom in" className="flex size-[10px] items-center justify-center rounded-full bg-[#e9edf2]">
        <svg viewBox="0 0 8 8" className="size-2" stroke="#222" strokeWidth="1.500"><path d="M1 4h6M4 1v6" /></svg>
      </button>
      <div className="ml-[5px] flex items-center gap-[5px]">
        <svg viewBox="0 0 10 8" className="h-2">
          <rect width="10" height="8" rx="2" fill="#e21b25" />
          <path d="M4 2.500v3L6.500 4z" fill="#fff" />
        </svg>
        <svg viewBox="0 0 12 12" className="size-[11px]">
          <circle cx="6" cy="6" r="5" fill="#d22b32" stroke="#e8a1a2" />
        </svg>
        <svg viewBox="0 0 12 12" className="size-3">
          <path d="M1 8h10v3H1z" fill="#d6e5ee" />
          <path d="M6 1l4 4H8v4H4V5H2z" fill="#55b53c" />
        </svg>
      </div>
    </footer>
  );
}

export default function App() {
  return (
    <div className="flex h-screen flex-col overflow-hidden bg-[#fdfcfe] font-['Open_Sans','Noto_Sans',sans-serif] text-[8px] leading-[11px] text-[#303138]">
      <Header />
      <Ribbon />
      <QuickToolbar />
      <DocumentTabs />
      <main className="relative flex min-h-0 flex-1 items-start bg-[#f6f4f9]">
        <Model />
        <PathFinder />
        <CommandBar />
        <div className="absolute top-[303px] left-1/2 -ml-px border border-[#222] bg-white px-[3px] text-gray-700">Edge</div>
      </main>
      <PromptBar />
      <StatusBar />
    </div>
  );
}
